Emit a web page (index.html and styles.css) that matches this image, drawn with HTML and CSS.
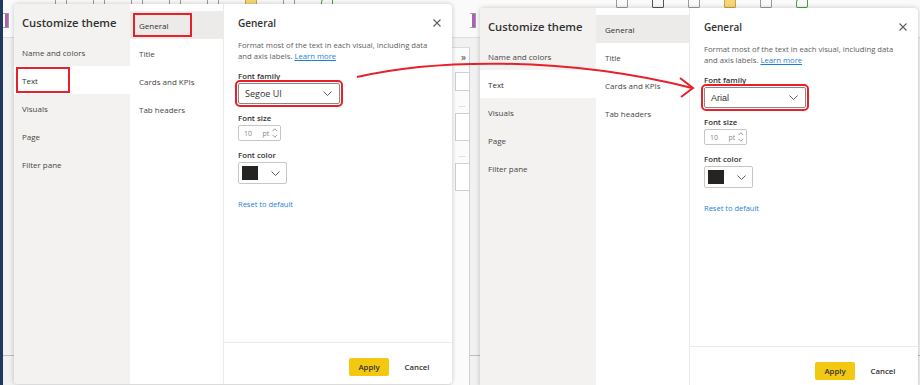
FILE: index.html
```html
<!DOCTYPE html>
<html lang="en">
<head>
    <meta charset="UTF-8">
    <meta name="viewport" content="width=device-width, initial-scale=1.0">
    <title>Customize theme - Text</title>
    <link rel="stylesheet" href="styles.css">
</head>
<body>
    <div class="canvas">

        <!-- Before: Segoe UI -->
        <section class="shot shot-left">
            <div class="edge"></div>
            <div class="app">
                <div class="ribbon">
                    <span class="ri ri-purple"></span>
                    <div class="ribbon-icons">
                        <span class="ri"></span><span class="ri"></span><span class="ri"></span>
                        <span class="ri"></span><span class="ri"></span>
                        <span class="ri ri-y"></span><span class="ri"></span><span class="ri ri-g"></span>
                    </div>
                </div>
                <div class="work">
                    <div class="report">
                        <div class="tabs"></div>
                    </div>
                    <div class="pane">
                        <span class="pane-chev">&raquo;</span>
                        <span class="pane-box"></span>
                        <span class="pane-dots">&middot;&middot;&middot;</span>
                        <span class="pane-box tall"></span>
                        <span class="pane-dots">&middot;&middot;&middot;</span>
                        <span class="pane-box tall"></span>
                    </div>
                </div>
            </div>

            <div class="dialog">
                <div class="nav">
                    <h1 class="nav-title">Customize theme</h1>
                    <div class="nav-item">Name and colors</div>
                    <div class="nav-item active"><span class="mark mark-text">Text</span></div>
                    <div class="nav-item">Visuals</div>
                    <div class="nav-item">Page</div>
                    <div class="nav-item">Filter pane</div>
                </div>
                <div class="subnav">
                    <div class="subnav-item active"><span class="mark mark-general">General</span></div>
                    <div class="subnav-item">Title</div>
                    <div class="subnav-item">Cards and KPIs</div>
                    <div class="subnav-item">Tab headers</div>
                </div>
                <div class="panel">
                    <div class="panel-body">
                        <div class="panel-head">
                            <h2>General</h2>
                            <svg class="close" width="8" height="8" viewBox="0 0 8 8"><path d="M0.5 0.5 L7.5 7.5 M7.5 0.5 L0.5 7.5" stroke="#605e5c" stroke-width="1.1"/></svg>
                        </div>
                        <div class="desc">
                            <span class="desc-line">Format most of the text in each visual, including data</span>
                            <span class="desc-line">and axis labels. <a href="#">Learn more</a></span>
                        </div>

                        <div class="field">
                            <label>Font family</label>
                            <div class="select highlighted">
                                <span class="select-value segoe">Segoe UI</span>
                                <svg width="9" height="5" viewBox="0 0 9 5"><path d="M0.5 0.5 L4.5 4.5 L8.5 0.5" fill="none" stroke="#605e5c" stroke-width="1"/></svg>
                            </div>
                        </div>
                        <div class="field">
                            <label>Font size</label>
                            <div class="spin">
                                <span class="spin-num">10</span>
                                <span class="spin-unit">pt</span>
                                <svg width="6" height="12" viewBox="0 0 6 12"><path d="M0.5 4 L3 1.5 L5.5 4 M0.5 8 L3 10.5 L5.5 8" fill="none" stroke="#8a8886" stroke-width="0.9"/></svg>
                            </div>
                        </div>
                        <div class="field">
                            <label>Font color</label>
                            <div class="color-pick">
                                <span class="swatch"></span>
                                <svg width="9" height="5" viewBox="0 0 9 5"><path d="M0.5 0.5 L4.5 4.5 L8.5 0.5" fill="none" stroke="#605e5c" stroke-width="1"/></svg>
                            </div>
                        </div>
                        <a class="reset" href="#">Reset to default</a>
                    </div>
                    <div class="panel-foot">
                        <button class="btn-apply">Apply</button>
                        <button class="btn-cancel">Cancel</button>
                    </div>
                </div>
            </div>
        </section>

        <!-- After: Arial -->
        <section class="shot shot-right">
            <div class="app">
                <div class="ribbon">
                    <span class="ri ri-purple"></span>
                    <div class="ribbon-icons">
                        <span class="ri"></span><span class="ri ri-dark"></span><span class="ri"></span>
                        <span class="ri ri-y"></span><span class="ri"></span><span class="ri ri-g"></span>
                    </div>
                </div>
                <div class="work">
                    <div class="report">
                        <div class="tabs"></div>
                    </div>
                </div>
            </div>

            <div class="dialog">
                <div class="nav">
                    <h1 class="nav-title">Customize theme</h1>
                    <div class="nav-item">Name and colors</div>
                    <div class="nav-item active">Text</div>
                    <div class="nav-item">Visuals</div>
                    <div class="nav-item">Page</div>
                    <div class="nav-item">Filter pane</div>
                </div>
                <div class="subnav">
                    <div class="subnav-item active">General</div>
                    <div class="subnav-item">Title</div>
                    <div class="subnav-item">Cards and KPIs</div>
                    <div class="subnav-item">Tab headers</div>
                </div>
                <div class="panel">
                    <div class="panel-body">
                        <div class="panel-head">
                            <h2>General</h2>
                            <svg class="close" width="8" height="8" viewBox="0 0 8 8"><path d="M0.5 0.5 L7.5 7.5 M7.5 0.5 L0.5 7.5" stroke="#605e5c" stroke-width="1.1"/></svg>
                        </div>
                        <div class="desc">
                            <span class="desc-line">Format most of the text in each visual, including data</span>
                            <span class="desc-line">and axis labels. <a href="#">Learn more</a></span>
                        </div>

                        <div class="field">
                            <label>Font family</label>
                            <div class="select highlighted">
                                <span class="select-value arial">Arial</span>
                                <svg width="9" height="5" viewBox="0 0 9 5"><path d="M0.5 0.5 L4.5 4.5 L8.5 0.5" fill="none" stroke="#605e5c" stroke-width="1"/></svg>
                            </div>
                        </div>
                        <div class="field">
                            <label>Font size</label>
                            <div class="spin">
                                <span class="spin-num">10</span>
                                <span class="spin-unit">pt</span>
                                <svg width="6" height="12" viewBox="0 0 6 12"><path d="M0.5 4 L3 1.5 L5.5 4 M0.5 8 L3 10.5 L5.5 8" fill="none" stroke="#8a8886" stroke-width="0.9"/></svg>
                            </div>
                        </div>
                        <div class="field">
                            <label>Font color</label>
                            <div class="color-pick">
                                <span class="swatch"></span>
                                <svg width="9" height="5" viewBox="0 0 9 5"><path d="M0.5 0.5 L4.5 4.5 L8.5 0.5" fill="none" stroke="#605e5c" stroke-width="1"/></svg>
                            </div>
                        </div>
                        <a class="reset" href="#">Reset to default</a>
                    </div>
                    <div class="panel-foot">
                        <button class="btn-apply">Apply</button>
                        <button class="btn-cancel">Cancel</button>
                    </div>
                </div>
            </div>
        </section>

        <!-- red annotation arrow -->
        <svg class="arrow" width="920" height="385" viewBox="0 0 920 385">
            <path d="M357 77 C 430 60, 560 55, 692 88" fill="none" stroke="#e8202a" stroke-width="2"/>
            <path d="M680 78 L693 88 L681 97" fill="none" stroke="#e8202a" stroke-width="2"/>
        </svg>
    </div>
</body>
</html>
```

FILE: styles.css
```css
:root {
    --red: #e8202a;
    --text: #323130;
    --muted: #605e5c;
    --nav-bg: #f3f2f1;
    --link: #1f7fd6;
    --yellow: #f2c811;
}

* {
    margin: 0;
    padding: 0;
    box-sizing: border-box;
}

body {
    width: 920px;
    height: 385px;
    overflow: hidden;
    background: #f0f0f0;
    font-family: "Open Sans", "Noto Sans", sans-serif;
    color: var(--text);
}

.canvas {
    position: relative;
    display: flex;
    width: 920px;
    height: 385px;
}

/* screenshot frames */
.shot {
    position: relative;
    display: flex;
    height: 385px;
    overflow: hidden;
}

.shot-left {
    width: 470px;
}

.shot-right {
    width: 450px;
}

.edge {
    width: 3px;
    background: #1d3a5e;
}

.app {
    flex: 1;
    display: flex;
    flex-direction: column;
    background: #f1f1f1;
}

.ribbon {
    height: 38px;
    display: flex;
    align-items: flex-start;
    background: #fafafa;
    border-bottom: 1px solid #dedede;
}

.ri {
    width: 12px;
    height: 11px;
    border: 1px solid #9a9a9a;
    border-radius: 1px;
}

.ri-purple {
    width: 6px;
    height: 15px;
    margin-top: 13px;
    border: 1px solid #9a9a9a;
    border-left: none;
    background: linear-gradient(to right, #fff 40%, #b05fb8 40%);
}

.ri-y {
    background: #f5d77a;
    border-color: #c9a53b;
}

.ri-g {
    border-color: #4c9a4c;
    border-radius: 50% 2px 2px 2px;
}

.ri-dark {
    border-color: #555;
}

.ribbon-icons {
    display: flex;
    gap: 26px;
    margin-top: -3px;
    margin-left: 46px;
}

.shot-right .ribbon-icons {
    gap: 24px;
    margin-left: 140px;
}

.work {
    flex: 1;
    display: flex;
}

.report {
    flex: 1;
    display: flex;
    flex-direction: column;
    justify-content: flex-end;
}

.tabs {
    height: 30px;
    border-top: 1px solid #bdbdbd;
}

.pane {
    width: 19px;
    margin-top: 9px;
    display: flex;
    flex-direction: column;
    align-items: flex-end;
    background: #fbfbfb;
    border-top: 1px solid #dcdcdc;
    border-right: 1px solid #d0d0d0;
}

.pane-chev {
    font-size: 10px;
    color: #444;
    line-height: 10px;
    margin: 4px 3px 0 0;
}

.pane-box {
    width: 14px;
    height: 19px;
    margin-top: 10px;
    border: 1px solid #d0d0d0;
    border-right: none;
    background: #fff;
}

.pane-box.tall {
    height: 28px;
    margin-top: 2px;
}

.pane-dots {
    font-size: 8px;
    color: #999;
    line-height: 10px;
    margin: 10px 4px 0 0;
}

/* dialog */
.dialog {
    position: absolute;
    display: flex;
    width: 438px;
    height: 380px;
    background: #fff;
    border-radius: 4px;
    box-shadow: 0 0 5px rgba(0, 0, 0, 0.22);
    overflow: hidden;
}

.shot-left .dialog {
    left: 14px;
    top: 4px;
}

.shot-right .dialog {
    left: 10px;
    top: 8px;
}

.nav {
    width: 116px;
    background: var(--nav-bg);
}

.nav-title {
    font-size: 11.2px;
    font-weight: 600;
    line-height: 16px;
    padding: 11px 8px 7px;
}

.nav-item,
.subnav-item {
    display: flex;
    align-items: center;
    height: 28px;
    padding-left: 8px;
    font-size: 8px;
    color: #484644;
}

.nav-item.active {
    background: #fff;
    color: var(--text);
}

.subnav {
    width: 93px;
    padding-top: 7px;
}

.subnav-item {
    padding-left: 9px;
}

.subnav-item.active {
    background: #edebe9;
    color: var(--text);
}

/* red highlight boxes */
.mark {
    display: inline-flex;
    align-items: center;
    margin-left: -6px;
    padding-left: 4px;
    border: 2px solid var(--red);
}

.mark-text {
    width: 54px;
    height: 26px;
}

.mark-general {
    width: 59px;
    height: 24px;
}

.panel {
    flex: 1;
    display: flex;
    flex-direction: column;
    border-left: 1px solid #edebe9;
}

.panel-body {
    flex: 1;
    padding: 8px 11px 0 14px;
}

.panel-head {
    display: flex;
    justify-content: space-between;
    align-items: center;
    height: 22px;
}

.panel-head h2 {
    font-size: 10px;
    font-weight: 600;
}

.desc {
    margin: 6px 0 8px;
    font-size: 7.7px;
    line-height: 11px;
    color: var(--muted);
}

.desc-line {
    display: block;
    white-space: nowrap;
}

.desc a {
    color: var(--link);
}

.field {
    margin-bottom: 8px;
}

.field label {
    display: block;
    font-size: 7.8px;
    font-weight: 600;
    line-height: 12px;
    margin-bottom: 1px;
}

.select {
    display: flex;
    align-items: center;
    justify-content: space-between;
    width: 102px;
    height: 21px;
    padding: 0 7px 0 6px;
    border: 1px solid #8a8886;
    border-radius: 2px;
}

.select.highlighted {
    outline: 2px solid var(--red);
    outline-offset: 1px;
}

.select-value {
    font-size: 9px;
}

.select-value.arial {
    font-family: "Liberation Sans", Arial, sans-serif;
}

.spin {
    display: flex;
    align-items: center;
    width: 43px;
    height: 16px;
    padding: 0 2px 0 5px;
    border: 1px solid #c8c6c4;
    border-radius: 2px;
    font-size: 7px;
    color: #8a8886;
}

.spin-num {
    width: 16px;
}

.spin-unit {
    width: 11px;
    text-align: right;
    margin-right: 3px;
}

.color-pick {
    display: flex;
    align-items: center;
    justify-content: space-between;
    width: 49px;
    height: 22px;
    padding: 0 6px 0 3px;
    border: 1px solid #c8c6c4;
    border-radius: 2px;
}

.swatch {
    width: 16px;
    height: 14px;
    background: #252423;
}

.reset {
    display: block;
    margin-top: 14px;
    font-size: 7.5px;
    line-height: 12px;
    color: var(--link);
    text-decoration: none;
}

.panel-foot {
    height: 42px;
    display: flex;
    align-items: flex-start;
    justify-content: flex-end;
    padding: 15px 12px 0 0;
    border-top: 1px solid #edebe9;
}

.panel-foot button {
    height: 18px;
    border: none;
    font-family: inherit;
    font-size: 7.8px;
    font-weight: 600;
    color: var(--text);
    cursor: pointer;
}

.btn-apply {
    width: 40px;
    background: var(--yellow);
    border-radius: 2px;
}

.btn-cancel {
    width: 46px;
    margin-left: 5px;
    background: transparent;
}

/* annotation overlay */
.arrow {
    position: absolute;
    left: 0;
    top: 0;
    pointer-events: none;
}
```
